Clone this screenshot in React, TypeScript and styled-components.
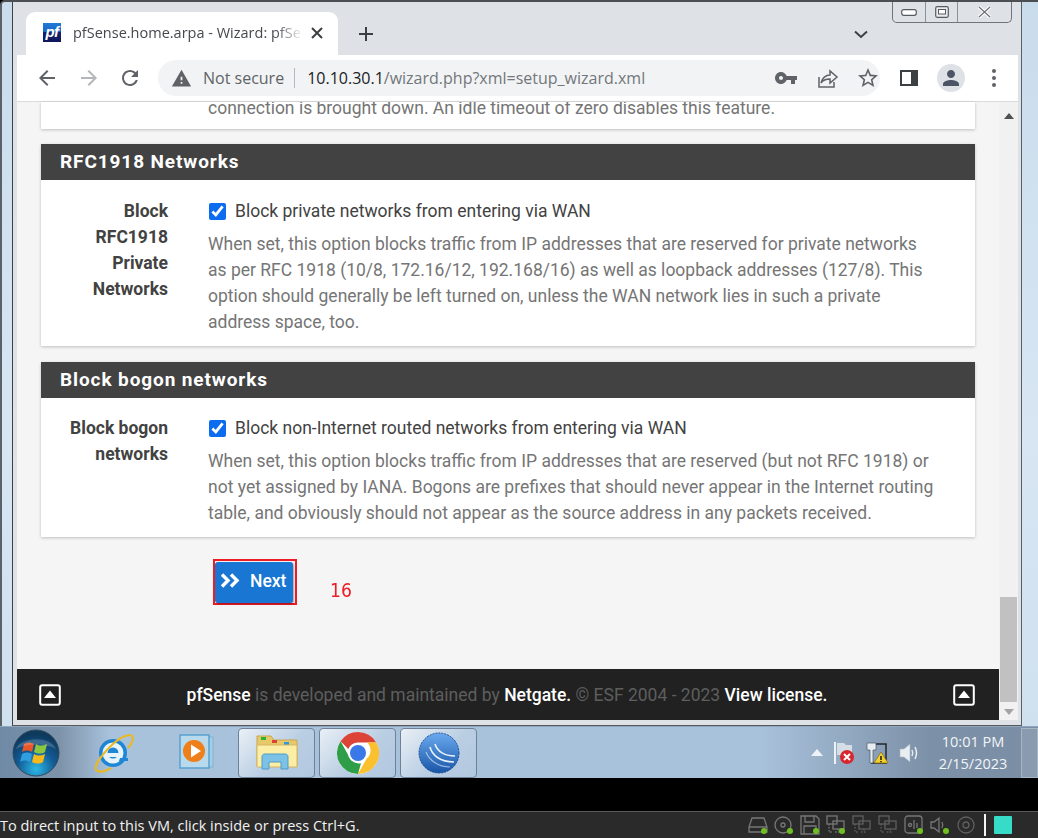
import React from 'react';
import styled, { createGlobalStyle } from 'styled-components';

const GlobalStyle = createGlobalStyle`
  html, body {
    margin: 0;
    padding: 0;
    background: #000;
  }
  * {
    box-sizing: border-box;
  }
`;

const UI_FONT = `'Open Sans', 'Noto Sans', sans-serif`;
const PAGE_FONT = `Roboto, 'Liberation Sans', sans-serif`;

const Screen = styled.div`
  width: 1038px;
  height: 838px;
  display: flex;
  flex-direction: column;
  overflow: hidden;
  background: #000;
`;

const Desktop = styled.div`
  height: 726px;
  display: flex;
  background: linear-gradient(180deg, #c9dcec 0%, #d8e6f3 60%, #cfe0ef 100%);
  border-top: 2px solid #4c4f52;
  border-left: 2px solid #5a6168;
  border-radius: 5px 0 0 0;
  padding-left: 10px;
  padding-right: 16px;
`;

const Window = styled.div`
  flex: 1;
  min-width: 0;
  display: flex;
  flex-direction: column;
  background: #dee1e6;
  border-left: 1px solid #3d4145;
  border-right: 1px solid #5a5f64;
  border-bottom: 1px solid #55595e;
  padding-bottom: 5px;
`;

const TabStrip = styled.div`
  height: 53px;
  display: flex;
  padding-left: 13px;
  padding-right: 9px;
`;

const Tab = styled.div`
  width: 312px;
  height: 43px;
  margin-top: 10px;
  background: #fff;
  border-radius: 9px 9px 0 0;
  display: flex;
  align-items: center;
  padding: 0 15px 2px 17px;
`;

const Favicon = styled.div`
  width: 18px;
  height: 19px;
  background: linear-gradient(180deg, #1f7ad8 0%, #1f67c4 45%, #17216d 46%, #10165a 100%);
  color: #fff;
  font: italic 700 15px/17px 'Liberation Sans', sans-serif;
  text-align: center;
  letter-spacing: -0.5px;
  flex: none;
`;

const TabTitle = styled.div`
  flex: 1;
  min-width: 0;
  margin-left: 12px;
  overflow: hidden;
  white-space: nowrap;
  font: 400 14.5px ${UI_FONT};
  color: #45484d;
  -webkit-mask-image: linear-gradient(90deg, #000 88%, transparent 100%);
  mask-image: linear-gradient(90deg, #000 88%, transparent 100%);
`;

const TabClose = styled.svg`
  width: 12px;
  height: 12px;
  margin-left: 8px;
  flex: none;
`;

const NewTab = styled.svg`
  width: 16px;
  height: 16px;
  margin: 24px 0 0 20px;
  flex: none;
`;

const StripSpacer = styled.div`
  flex: 1;
`;

const TabChevron = styled.svg`
  width: 14px;
  height: 9px;
  margin: 28px 24px 0 0;
  flex: none;
`;

const CaptionButtons = styled.div`
  width: 120px;
  height: 21px;
  display: flex;
  border: 1px solid #70757b;
  border-top: none;
  border-radius: 0 0 5px 5px;
  flex: none;
`;

const CaptionButton = styled.div<{ $wide?: boolean }>`
  width: ${(p) => (p.$wide ? 54 : 32)}px;
  display: flex;
  align-items: center;
  justify-content: center;
  border-left: 1px solid #8b9096;
  &:first-child {
    border-left: none;
  }
`;

const Toolbar = styled.div`
  height: 47px;
  margin: 0 3px 0 4px;
  background: #fff;
  display: flex;
  align-items: center;
  padding-left: 18px;
  border-bottom: 1px solid #d9dadc;
`;

const NavIcon = styled.svg<{ $gap?: number }>`
  width: 24px;
  height: 24px;
  margin-left: ${(p) => p.$gap ?? 0}px;
  flex: none;
`;

const Omnibox = styled.div`
  width: 722px;
  height: 36px;
  margin-left: 16px;
  border-radius: 18px;
  background: #f1f3f4;
  display: flex;
  align-items: center;
  padding-left: 13px;
  font-family: ${UI_FONT};
  flex: none;
`;

const NotSecure = styled.span`
  margin-left: 11px;
  font-size: 16px;
  color: #5f6368;
  padding-right: 10px;
  border-right: 1px solid #b6b8bb;
  line-height: 20px;
  white-space: nowrap;
`;

const Url = styled.span`
  margin-left: 12px;
  font-size: 16px;
  color: #73777b;
  white-space: nowrap;
  flex: 1;
`;

const UrlHost = styled.span`
  color: #202124;
`;

const Content = styled.div`
  flex: 1;
  min-height: 0;
  display: flex;
  margin: 0 3px 0 4px;
  background: #f5f5f5;
`;

const PageColumn = styled.div`
  flex: 1;
  min-width: 0;
  display: flex;
  flex-direction: column;
  font-family: ${PAGE_FONT};
`;

const PageBody = styled.div`
  flex: 1;
  min-height: 0;
  padding: 0 24px;
  display: flex;
  flex-direction: column;
`;

const ClippedCard = styled.div`
  height: 27px;
  background: #fff;
  box-shadow: 0 1px 3px rgba(0, 0, 0, 0.22);
  overflow: hidden;
  display: flex;
  align-items: flex-end;
  padding: 0 0 8px 167px;
  margin-bottom: 15px;
`;

const Card = styled.section`
  background: #fff;
  box-shadow: 0 1px 3px rgba(0, 0, 0, 0.22);
  margin-bottom: 16px;
`;

const CardHeading = styled.h2`
  margin: 0;
  height: 36px;
  background: #424242;
  color: #fff;
  font: 700 19px/36px ${PAGE_FONT};
  letter-spacing: 0.9px;
  padding-left: 19px;
`;

const CardRow = styled.div<{ $top: number }>`
  display: flex;
  padding: ${(p) => p.$top}px 12px 11px 0;
`;

const RowLabel = styled.div`
  width: 127px;
  margin-right: 40px;
  text-align: right;
  font-weight: 700;
  font-size: 17.5px;
  line-height: 26px;
  color: #424242;
  flex: none;
`;

const RowBody = styled.div`
  flex: 1;
  min-width: 0;
`;

const CheckLine = styled.label`
  display: flex;
  align-items: center;
  height: 26px;
  font-size: 17.5px;
  color: #424242;
  margin-bottom: 7px;
`;

const CheckBox = styled.input`
  width: 17px;
  height: 17px;
  margin: 0 9px 0 1px;
  accent-color: #0b6cf0;
`;

const HelpText = styled.div`
  font-size: 17.5px;
  line-height: 26px;
  color: #757575;
  white-space: nowrap;
`;

const ActionRow = styled.div`
  display: flex;
  align-items: flex-start;
  margin: 6px 0 0 172px;
`;

const Highlight = styled.div`
  border: 2px solid #ee1c25;
  width: 84px;
  height: 46px;
  padding-top: 1px;
`;

const NextButton = styled.button`
  width: 78px;
  height: 41px;
  border: none;
  border-radius: 3px;
  background: #1976d2;
  color: #fff;
  display: flex;
  align-items: center;
  padding: 0 0 4px 6px;
  font: 500 17.5px ${PAGE_FONT};
  box-shadow: 1px 1px 2px rgba(0, 0, 0, 0.35);
`;

const NextIcon = styled.svg`
  width: 20px;
  height: 15px;
  margin-right: 9px;
  flex: none;
`;

const StepNumber = styled.span`
  margin: 19px 0 0 33px;
  color: #ee1c25;
  font: 400 20px/24px 'DejaVu Sans', sans-serif;
  transform: scaleX(0.86);
  transform-origin: left center;
`;

const Footer = styled.footer`
  height: 51px;
  background: #212121;
  color: #fff;
  display: flex;
  align-items: center;
  justify-content: space-between;
  padding: 0 24px 0 22px;
  font-size: 17.5px;
  flex: none;
`;

const FooterText = styled.div`
  color: #5e5e5e;
  white-space: nowrap;
`;

const FooterStrong = styled.span`
  color: #fff;
  font-weight: 500;
`;

const FooterIcon = styled.svg`
  width: 22px;
  height: 22px;
  flex: none;
`;

const Scrollbar = styled.div`
  width: 19px;
  background: #f1f1f1;
  display: flex;
  flex-direction: column;
  align-items: center;
  padding: 11px 0 5px;
  flex: none;
`;

const ScrollArrow = styled.div<{ $down?: boolean }>`
  width: 0;
  height: 0;
  border-left: 5px solid transparent;
  border-right: 5px solid transparent;
  ${(p) => (p.$down ? 'border-top: 6px solid #a3a3a3;' : 'border-bottom: 6px solid #505050;')}
`;

const ScrollGap = styled.div`
  flex: 1;
`;

const ScrollThumb = styled.div`
  width: 17px;
  height: 105px;
  background: #c1c1c1;
  margin-bottom: 7px;
`;

const Taskbar = styled.div`
  height: 52px;
  display: flex;
  align-items: center;
  background: linear-gradient(
    90deg,
    #6f8aa6 0,
    #7d93aa 60px,
    #a9c2dc 110px,
    #a9c2dc 760px,
    #7c90a7 930px,
    #7a8ea5 1038px
  );
  border-top: 1px solid #8fa6bd;
  color: #f4f7fa;
`;

const TaskSlot = styled.div<{ $width: number }>`
  width: ${(p) => p.$width}px;
  height: 100%;
  display: flex;
  align-items: center;
  justify-content: center;
  flex: none;
`;

const TaskButton = styled.div`
  width: 77px;
  height: 50px;
  margin-right: 4px;
  border: 1px solid #6f8197;
  border-radius: 4px;
  background: linear-gradient(135deg, rgba(255, 255, 255, 0.75) 0%, rgba(255, 255, 255, 0.2) 55%, rgba(255, 255, 255, 0.1) 100%);
  display: flex;
  align-items: center;
  justify-content: center;
  flex: none;
`;

const TraySpacer = styled.div`
  flex: 1;
`;

const Tray = styled.div`
  display: flex;
  align-items: center;
  gap: 9px;
  margin-right: 15px;
`;

const Clock = styled.div`
  width: 76px;
  font: 400 14.5px/22px ${UI_FONT};
  text-align: center;
  color: #f2f5f8;
  white-space: nowrap;
`;

const ShowDesktop = styled.div`
  width: 17px;
  height: 50px;
  margin-left: 10px;
  border: 1px solid #a9b6c3;
  background: rgba(255, 255, 255, 0.12);
`;

const BlackGap = styled.div`
  height: 33px;
  background: #000;
  flex: none;
`;

const StatusBar = styled.div`
  height: 27px;
  background: #2a2a2a;
  border-top: 1px solid #595959;
  display: flex;
  align-items: center;
  color: #f2f2f2;
  font: 400 14.5px ${UI_FONT};
  padding-right: 26px;
`;

const StatusText = styled.span`
  flex: 1;
  white-space: nowrap;
`;

const DeviceIcons = styled.div`
  display: flex;
  align-items: center;
  gap: 6px;
`;

const Divider = styled.div`
  width: 2px;
  height: 22px;
  background: #f5f5f5;
  margin: 0 8px 0 8px;
`;

const NoteIcon = styled.div`
  width: 18px;
  height: 18px;
  background: #36dcc8;
  border-radius: 1px;
`;

const DeviceSvg = ({ children }: { children: React.ReactNode }) => (
  <svg width="20" height="20" viewBox="0 0 20 20" fill="none" stroke="#777" strokeWidth="1.3">
    {children}
    <circle cx="16" cy="16" r="3" fill="#6fbf1f" stroke="none" />
  </svg>
);

const Monitors = () => (
  <>
    <rect x="1" y="1" width="10" height="8" />
    <rect x="7" y="6" width="11" height="8" />
    <path d="M12 14v3M9 17h6M3 9v8h4" strokeDasharray="1.5 1.5" />
  </>
);

const HELP = {
  rfc: [
    'When set, this option blocks traffic from IP addresses that are reserved for private networks',
    'as per RFC 1918 (10/8, 172.16/12, 192.168/16) as well as loopback addresses (127/8). This',
    'option should generally be left turned on, unless the WAN network lies in such a private',
    'address space, too.',
  ],
  bogon: [
    'When set, this option blocks traffic from IP addresses that are reserved (but not RFC 1918) or',
    'not yet assigned by IANA. Bogons are prefixes that should never appear in the Internet routing',
    'table, and obviously should not appear as the source address in any packets received.',
  ],
};

const UpBox = () => (
  <FooterIcon viewBox="0 0 22 22">
    <rect x="1.2" y="1.2" width="19.6" height="19.6" rx="2" fill="none" stroke="#fff" strokeWidth="2" />
    <path d="M11 6.5 17 14H5z" fill="#fff" />
  </FooterIcon>
);

const WinOrb = () => (
  <svg width="48" height="48" viewBox="0 0 48 48">
    <defs>
      <radialGradient id="orb" cx="50%" cy="85%" r="75%">
        <stop offset="0" stopColor="#2bb8e6" />
        <stop offset="0.55" stopColor="#125a94" />
        <stop offset="1" stopColor="#0e3a5e" />
      </radialGradient>
    </defs>
    <circle cx="24" cy="24" r="23" fill="url(#orb)" stroke="#33485c" />
    <path d="M12 15c3-2 6-2 10 0l-2 8c-3-2-7-2-10 0z" fill="#e8562a" />
    <path d="M24 15c3 2 7 2 11 0l-2 8c-3 2-7 2-11 0z" fill="#8dc63f" />
    <path d="M10 25c3-2 6-2 10 0l-2 8c-3-2-7-2-10 0z" fill="#2f9fe0" />
    <path d="M22 25c3 2 7 2 11 0l-2 8c-3 2-7 2-11 0z" fill="#f7b919" />
    <path d="M4 20C8 8 38 6 44 20 34 14 14 14 4 20z" fill="#fff" opacity="0.18" />
  </svg>
);

const IeIcon = () => (
  <svg width="42" height="42" viewBox="0 0 42 42" fill="none">
    <circle cx="21" cy="21" r="14" fill="#1f86d6" />
    <circle cx="21" cy="21" r="8" fill="none" stroke="#e6f3fb" strokeWidth="5" />
    <path d="M13 21h17v4H13z" fill="#e6f3fb" />
    <path d="M28 26h8v3h-9z" fill="#1f86d6" />
    <path d="M4 38C0 32 24 4 38 3c4 0 4 6-2 13" stroke="#e9b825" strokeWidth="2.2" />
    <path d="M4 38c4 3 10 1 15-2" stroke="#e9b825" strokeWidth="2.2" />
  </svg>
);

const MediaIcon = () => (
  <svg width="40" height="40" viewBox="0 0 40 40">
    <rect x="8" y="4" width="28" height="30" fill="#a7cde4" stroke="#7fb2d2" />
    <rect x="3" y="2" width="29" height="33" fill="#b9d9ec" stroke="#58a2cf" strokeWidth="1.5" />
    <circle cx="17" cy="18" r="11" fill="#ef7f1a" />
    <path d="M14 11.5 24 18l-10 6.5z" fill="#fff" />
  </svg>
);

const FolderIcon = () => (
  <svg width="42" height="40" viewBox="0 0 42 40">
    <path d="M1 3h14l3 4h23v26H1z" fill="#e8c96a" stroke="#c9a550" />
    <rect x="5" y="4" width="5" height="3" fill="#27b33a" />
    <rect x="16" y="7" width="5" height="3" fill="#d9432f" />
    <rect x="28" y="9" width="5" height="3" fill="#2b9ad6" />
    <path d="M1 12h40v22H1z" fill="#fdeea6" stroke="#d5b560" />
    <path d="M6 36V24c0-2 1-3 3-3h20c2 0 3 1 3 3v12h-7v-7H13v7z" fill="#7cc1e6" stroke="#4c9cc8" />
  </svg>
);

const ChromeIcon = () => (
  <svg width="42" height="42" viewBox="0 0 42 42">
    <circle cx="21" cy="21" r="21" fill="#fff" />
    <path d="M21 0a21 21 0 0 1 18.2 10.5H21a10.5 10.5 0 0 0-9.7 6.5L3.6 9.2A21 21 0 0 1 21 0z" fill="#db4437" />
    <path d="M39.2 10.5A21 21 0 0 1 21 42l8.9-15.8a10.5 10.5 0 0 0 .2-15.7z" fill="#fbc02d" />
    <path d="M21 42A21 21 0 0 1 3.6 9.2L12 24.5a10.5 10.5 0 0 0 12 6.7L21 42z" fill="#2e9e48" />
    <circle cx="21" cy="21" r="10" fill="#fff" />
    <circle cx="21" cy="21" r="8" fill="#3b78e7" />
  </svg>
);

const WinboxIcon = () => (
  <svg width="42" height="42" viewBox="0 0 42 42" fill="none">
    <defs>
      <linearGradient id="wb" x1="0" y1="0" x2="0" y2="1">
        <stop offset="0" stopColor="#6aa9ee" />
        <stop offset="1" stopColor="#1a56a8" />
      </linearGradient>
    </defs>
    <circle cx="21" cy="21" r="20" fill="url(#wb)" stroke="#1c4f93" strokeDasharray="2 1" />
    <path d="M12 15c2 8 10 15 24 15" stroke="#e7f2fd" strokeWidth="1.6" />
    <path d="M17 12c2 7 9 12 20 12" stroke="#e7f2fd" strokeWidth="1.6" />
    <path d="M8 20c3 8 12 15 24 15" stroke="#e7f2fd" strokeWidth="1.2" opacity="0.6" />
  </svg>
);

const FlagTray = () => (
  <svg width="24" height="24" viewBox="0 0 24 24">
    <path d="M3 1v22" stroke="#eef2f6" strokeWidth="2" />
    <path d="M5 2h7l2 2h6v10H5z" fill="#d5dde5" />
    <circle cx="15" cy="16" r="7" fill="#d8262c" />
    <path d="m12 13 6 6m0-6-6 6" stroke="#fff" strokeWidth="2" />
  </svg>
);

const NetTray = () => (
  <svg width="24" height="24" viewBox="0 0 24 24" fill="none">
    <path d="M10 3h11v19H6" stroke="#20262c" strokeWidth="1.5" />
    <path d="M2 2h9v7H8v13H5V9H2z" fill="#e7edf2" stroke="#4b5560" strokeWidth="0.7" />
    <path d="M16 11l7 11H9z" fill="#f5cf2c" stroke="#8a6d10" strokeWidth="0.7" />
    <path d="M16 15v4M16 20v1.2" stroke="#222" strokeWidth="1.6" />
  </svg>
);

const SpeakerTray = () => (
  <svg width="22" height="22" viewBox="0 0 22 22" fill="none">
    <path d="M2 7h4l6-5v18l-6-5H2z" fill="#e9eef3" stroke="#aab4bf" strokeWidth="0.6" />
    <path d="M14 8c1 2 1 4 0 6M17 5c2 4 2 8 0 12" stroke="#e9eef3" strokeWidth="1.5" />
  </svg>
);

export default function App() {
  return (
    <Screen>
      <GlobalStyle />
      <Desktop>
        <Window>
          <TabStrip>
            <Tab>
              <Favicon>pf</Favicon>
              <TabTitle>pfSense.home.arpa - Wizard: pfSense Setup</TabTitle>
              <TabClose viewBox="0 0 12 12">
                <path d="M1 1l10 10M11 1 1 11" stroke="#3c4043" strokeWidth="2" />
              </TabClose>
            </Tab>
            <NewTab viewBox="0 0 16 16">
              <path d="M8 1v14M1 8h14" stroke="#3c4043" strokeWidth="2" />
            </NewTab>
            <StripSpacer />
            <TabChevron viewBox="0 0 14 9">
              <path d="M1 1.5 7 7l6-5.5" fill="none" stroke="#3c4043" strokeWidth="2" />
            </TabChevron>
            <CaptionButtons>
              <CaptionButton>
                <svg width="16" height="7" viewBox="0 0 16 7">
                  <rect x="0.7" y="0.7" width="14.6" height="5.6" rx="2" fill="#fff" stroke="#565b60" strokeWidth="1.2" />
                </svg>
              </CaptionButton>
              <CaptionButton>
                <svg width="14" height="12" viewBox="0 0 14 12">
                  <rect x="0.7" y="0.7" width="12.6" height="10.6" rx="1.5" fill="#e9ebee" stroke="#565b60" strokeWidth="1.2" />
                  <rect x="3.5" y="3.5" width="7" height="4.5" fill="#fff" stroke="#565b60" />
                </svg>
              </CaptionButton>
              <CaptionButton $wide>
                <svg width="15" height="12" viewBox="0 0 15 12">
                  <path d="M2 1l11 10M13 1 2 11" stroke="#fff" strokeWidth="3.4" />
                  <path d="M2 1l11 10M13 1 2 11" stroke="#6d7277" strokeWidth="1.2" strokeDasharray="0" fill="none" />
                </svg>
              </CaptionButton>
            </CaptionButtons>
          </TabStrip>
          <Toolbar>
            <NavIcon viewBox="0 0 24 24" fill="#5f6368">
              <path d="M20 11H7.83l5.59-5.59L12 4l-8 8 8 8 1.41-1.41L7.83 13H20v-2z" />
            </NavIcon>
            <NavIcon viewBox="0 0 24 24" fill="#b4b6b9" $gap={18}>
              <path d="M12 4l-1.41 1.41L16.17 11H4v2h12.17l-5.58 5.59L12 20l8-8z" />
            </NavIcon>
            <NavIcon viewBox="0 0 24 24" fill="#5f6368" $gap={17}>
              <path d="M17.65 6.35C16.2 4.9 14.21 4 12 4c-4.42 0-7.99 3.58-7.99 8s3.57 8 7.99 8c3.73 0 6.84-2.55 7.73-6h-2.08c-.82 2.33-3.04 4-5.65 4-3.31 0-6-2.69-6-6s2.69-6 6-6c1.66 0 3.14.69 4.22 1.78L13 11h7V4l-2.35 2.35z" />
            </NavIcon>
            <Omnibox>
              <svg width="21" height="21" viewBox="0 0 24 24" fill="#5f6368">
                <path d="M1 21h22L12 2 1 21zm12-3h-2v-2h2v2zm0-4h-2v-4h2v4z" />
              </svg>
              <NotSecure>Not secure</NotSecure>
              <Url>
                <UrlHost>10.10.30.1</UrlHost>/wizard.php?xml=setup_wizard.xml
              </Url>
              <NavIcon viewBox="0 0 24 24" fill="#5f6368">
                <path d="M12.65 10C11.83 7.67 9.61 6 7 6c-3.31 0-6 2.69-6 6s2.69 6 6 6c2.61 0 4.83-1.67 5.65-4H17v4h4v-4h2v-4H12.65zM7 14c-1.1 0-2-.9-2-2s.9-2 2-2 2 .9 2 2-.9 2-2 2z" />
              </NavIcon>
              <NavIcon viewBox="0 0 24 24" fill="none" stroke="#5f6368" strokeWidth="1.5" $gap={17}>
                <path d="M4 11v10h15v-5M6 17c1-5 5-8 9-8V5l7 6-7 6v-4c-4 0-7 1-9 4z" />
              </NavIcon>
              <NavIcon viewBox="0 0 24 24" fill="#5f6368" $gap={17}>
                <path d="M22 9.24l-7.19-.62L12 2 9.19 8.63 2 9.24l5.46 4.73L5.82 21 12 17.27 18.18 21l-1.63-7.03L22 9.24zM12 15.4l-3.76 2.27 1-4.28-3.32-2.88 4.38-.38L12 6.1l1.71 4.04 4.38.38-3.32 2.88 1 4.28L12 15.4z" />
              </NavIcon>
            </Omnibox>
            <NavIcon viewBox="0 0 24 24" $gap={17}>
              <path d="M3 4h18v16H3z" fill="#3c4043" />
              <path d="M5 6h9v12H5z" fill="#fff" />
            </NavIcon>
            <svg width="28" height="28" viewBox="0 0 28 28" style={{ marginLeft: 16, flex: 'none' }}>
              <circle cx="14" cy="14" r="14" fill="#dee1e6" />
              <path d="M14 14c2.2 0 4-1.8 4-4s-1.8-4-4-4-4 1.8-4 4 1.8 4 4 4zm0 2c-2.7 0-8 1.3-8 4v2h16v-2c0-2.7-5.3-4-8-4z" fill="#4b5565" />
            </svg>
            <NavIcon viewBox="0 0 24 24" fill="#5f6368" $gap={17}>
              <circle cx="12" cy="5" r="2" />
              <circle cx="12" cy="12" r="2" />
              <circle cx="12" cy="19" r="2" />
            </NavIcon>
          </Toolbar>
          <Content>
            <PageColumn>
              <PageBody>
                <ClippedCard>
                  <HelpText>connection is brought down. An idle timeout of zero disables this feature.</HelpText>
                </ClippedCard>
                <Card>
                  <CardHeading>RFC1918 Networks</CardHeading>
                  <CardRow $top={18}>
                    <RowLabel>
                      Block
                      <br />
                      RFC1918
                      <br />
                      Private
                      <br />
                      Networks
                    </RowLabel>
                    <RowBody>
                      <CheckLine>
                        <CheckBox type="checkbox" defaultChecked />
                        Block private networks from entering via WAN
                      </CheckLine>
                      {HELP.rfc.map((line) => (
                        <HelpText key={line}>{line}</HelpText>
                      ))}
                    </RowBody>
                  </CardRow>
                </Card>
                <Card>
                  <CardHeading>Block bogon networks</CardHeading>
                  <CardRow $top={17}>
                    <RowLabel>
                      Block bogon
                      <br />
                      networks
                    </RowLabel>
                    <RowBody>
                      <CheckLine>
                        <CheckBox type="checkbox" defaultChecked />
                        Block non-Internet routed networks from entering via WAN
                      </CheckLine>
                      {HELP.bogon.map((line) => (
                        <HelpText key={line}>{line}</HelpText>
                      ))}
                    </RowBody>
                  </CardRow>
                </Card>
                <ActionRow>
                  <Highlight>
                    <NextButton>
                      <NextIcon viewBox="0 0 20 15">
                        <path d="M1 1.5 7 7.5l-6 6M10 1.5l6 6-6 6" fill="none" stroke="#fff" strokeWidth="3.4" />
                      </NextIcon>
                      Next
                    </NextButton>
                  </Highlight>
                  <StepNumber>16</StepNumber>
                </ActionRow>
              </PageBody>
              <Footer>
                <UpBox />
                <FooterText>
                  <FooterStrong>pfSense</FooterStrong> is developed and maintained by{' '}
                  <FooterStrong>Netgate.</FooterStrong> © ESF 2004 - 2023 <FooterStrong>View license.</FooterStrong>
                </FooterText>
                <UpBox />
              </Footer>
            </PageColumn>
            <Scrollbar>
              <ScrollArrow />
              <ScrollGap />
              <ScrollThumb />
              <ScrollArrow $down />
            </Scrollbar>
          </Content>
        </Window>
      </Desktop>
      <Taskbar>
        <TaskSlot $width={71}>
          <WinOrb />
        </TaskSlot>
        <TaskSlot $width={84}>
          <IeIcon />
        </TaskSlot>
        <TaskSlot $width={83}>
          <MediaIcon />
        </TaskSlot>
        <TaskButton>
          <FolderIcon />
        </TaskButton>
        <TaskButton>
          <ChromeIcon />
        </TaskButton>
        <TaskButton>
          <WinboxIcon />
        </TaskButton>
        <TraySpacer />
        <Tray>
          <svg width="12" height="7" viewBox="0 0 12 7">
            <path d="M6 0l6 7H0z" fill="#eef3f7" />
          </svg>
          <FlagTray />
          <NetTray />
          <SpeakerTray />
        </Tray>
        <Clock>
          10:01 PM
          <br />
          2/15/2023
        </Clock>
        <ShowDesktop />
      </Taskbar>
      <BlackGap />
      <StatusBar>
        <StatusText>To direct input to this VM, click inside or press Ctrl+G.</StatusText>
        <DeviceIcons>
          <DeviceSvg>
            <path d="M4 3h12l3 9v5H1v-5zM1 12h18" />
          </DeviceSvg>
          <DeviceSvg>
            <circle cx="9" cy="10" r="8" />
            <circle cx="9" cy="10" r="2" />
          </DeviceSvg>
          <DeviceSvg>
            <path d="M1 1h15l3 3v15H1zM5 1v6h9V1M4 19v-8h12v8" />
          </DeviceSvg>
          <DeviceSvg>
            <Monitors />
          </DeviceSvg>
          <svg width="20" height="20" viewBox="0 0 20 20" fill="none" stroke="#5f5f5f" strokeWidth="1.3">
            <Monitors />
          </svg>
          <svg width="20" height="20" viewBox="0 0 20 20" fill="none" stroke="#5f5f5f" strokeWidth="1.3">
            <Monitors />
          </svg>
          <DeviceSvg>
            <rect x="1" y="1" width="17" height="17" rx="3" />
            <circle cx="6" cy="10" r="1.5" />
            <path d="M10 5v9M13 8v5" />
          </DeviceSvg>
          <DeviceSvg>
            <path d="M1 7h3l5-4v14l-5-4H1zM12 7c1 2 1 4 0 6" />
          </DeviceSvg>
          <svg width="20" height="20" viewBox="0 0 20 20" fill="none" stroke="#5f5f5f" strokeWidth="1.3">
            <circle cx="10" cy="10" r="8" />
            <circle cx="10" cy="10" r="3" />
          </svg>
        </DeviceIcons>
        <Divider />
        <NoteIcon />
      </StatusBar>
    </Screen>
  );
}
